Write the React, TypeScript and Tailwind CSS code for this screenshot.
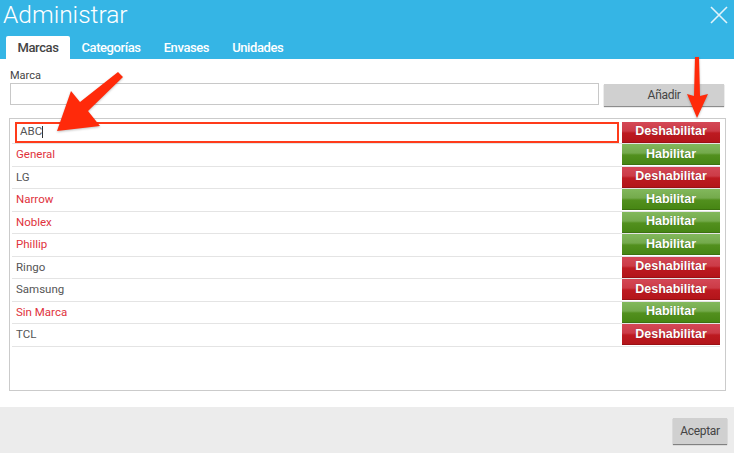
import React from 'react';

const brands = [
  { name: 'General', enabled: false },
  { name: 'LG', enabled: true },
  { name: 'Narrow', enabled: false },
  { name: 'Noblex', enabled: false },
  { name: 'Phillip', enabled: false },
  { name: 'Ringo', enabled: true },
  { name: 'Samsung', enabled: true },
  { name: 'Sin Marca', enabled: false },
  { name: 'TCL', enabled: true },
];

const tabs = ['Marcas', 'Categorías', 'Envases', 'Unidades'];

function ToggleButton({ enabled }: { enabled: boolean }) {
  return enabled ? (
    <button className="w-[98px] h-[21px] shrink-0 bg-[linear-gradient(#d44856_0%,#cc3b47_45%,#bd1a21_55%,#b3151a_100%)] text-white text-[12.5px] font-bold font-['Liberation_Sans',sans-serif] [text-shadow:0_0_1px_rgba(0,0,0,0.3)] border-b border-[#9a1014]">
      Deshabilitar
    </button>
  ) : (
    <button className="w-[98px] h-[21px] shrink-0 bg-[linear-gradient(#82b85c_0%,#74aa4c_45%,#52901e_55%,#478614_100%)] text-white text-[12.5px] font-bold font-['Liberation_Sans',sans-serif] [text-shadow:0_0_1px_rgba(0,0,0,0.3)] border-b border-[#3c7010]">
      Habilitar
    </button>
  );
}

export default function App() {
  return (
    <div className="relative w-[734px] h-[453px] overflow-hidden bg-white font-['Roboto',sans-serif]">
      {/* Header */}
      <header className="h-[59px] bg-[#35b5e5] flex flex-col">
        <div className="h-[36px] flex items-start justify-between pl-[3px] pr-[6px]">
          <h1 className="text-[24.5px] leading-[30px] font-light text-white">Administrar</h1>
          <svg className="mt-[6px]" width="18" height="18" viewBox="0 0 18 18">
            <path d="M1 1L17 17M17 1L1 17" stroke="white" strokeWidth="1.6" opacity="0.85" />
          </svg>
        </div>
        <nav className="flex items-end pl-[6px] h-[23px]">
          {tabs.map((t, i) => (
            <div
              key={t}
              className={
                i === 0
                  ? 'h-[23px] px-[11.5px] bg-white rounded-t-[2px] text-[#444] text-[13px] font-medium tracking-[-0.4px] leading-[23px]'
                  : 'h-[23px] px-[11.5px] text-white text-[13px] font-medium tracking-[-0.4px] leading-[23px]'
              }
            >
              {t}
            </div>
          ))}
        </nav>
      </header>

      {/* Body */}
      <main className="h-[348px] px-[10px] pt-[10px]">
        <label className="block text-[11px] leading-[14px] text-[#444]">Marca</label>
        <div className="flex gap-[5px]">
          <input className="w-[590px] h-[22px] border border-[#c8c8c8] outline-none" />
          <button className="w-[120px] h-[22px] mt-[1px] bg-[#d0d0d0] shadow-[0_1px_1px_rgba(0,0,0,0.45)] text-[12px] text-[#444] tracking-[-0.3px]">
            Añadir
          </button>
        </div>

        <div className="-ml-[1px] mt-[12px] w-[717px] h-[273px] border border-[#cbcbcb] pt-[2px] pl-[2px] pr-[5px]">
          <div className="flex items-center h-[23px] border-b border-[#e4e4e4]">
            <div className="flex-1 pl-[3px] pr-[3px]">
              <div className="h-[21px] border-2 border-[#ff3b1a] flex items-center pl-[3px] text-[11.5px] text-[#555]">
                ABC<span className="w-px h-[12px] bg-[#333]" />
              </div>
            </div>
            <ToggleButton enabled={true} />
          </div>
          {brands.map((b) => (
            <div key={b.name} className="flex items-center justify-between h-[22.5px] border-b border-[#e4e4e4]">
              <span className={`pl-[4px] text-[11.5px] ${b.enabled ? 'text-[#555]' : 'text-[#e0323c]'}`}>{b.name}</span>
              <ToggleButton enabled={b.enabled} />
            </div>
          ))}
        </div>
      </main>

      {/* Footer */}
      <footer className="h-[46px] bg-[#ececec] flex items-start justify-end pr-[7px] pt-[11px]">
        <button className="w-[54px] h-[26px] bg-[#d0d0d0] shadow-[0_1px_1px_rgba(0,0,0,0.45)] text-[12px] text-[#444] tracking-[-0.3px]">
          Aceptar
        </button>
      </footer>

      {/* Annotation arrows */}
      <svg className="absolute inset-0 pointer-events-none" width="734" height="453" viewBox="0 0 734 453">
        <g fill="#ff2a0a" style={{ filter: 'drop-shadow(0 1px 1px rgba(0,0,0,0.25))' }}>
          <polygon points="118,72 123,77 88,111 100,126 57,131 71,91 80,102" />
          <polygon points="695,57 699,57 700,96 708,94 697,118 687,94 694,96" />
        </g>
      </svg>
    </div>
  );
}
